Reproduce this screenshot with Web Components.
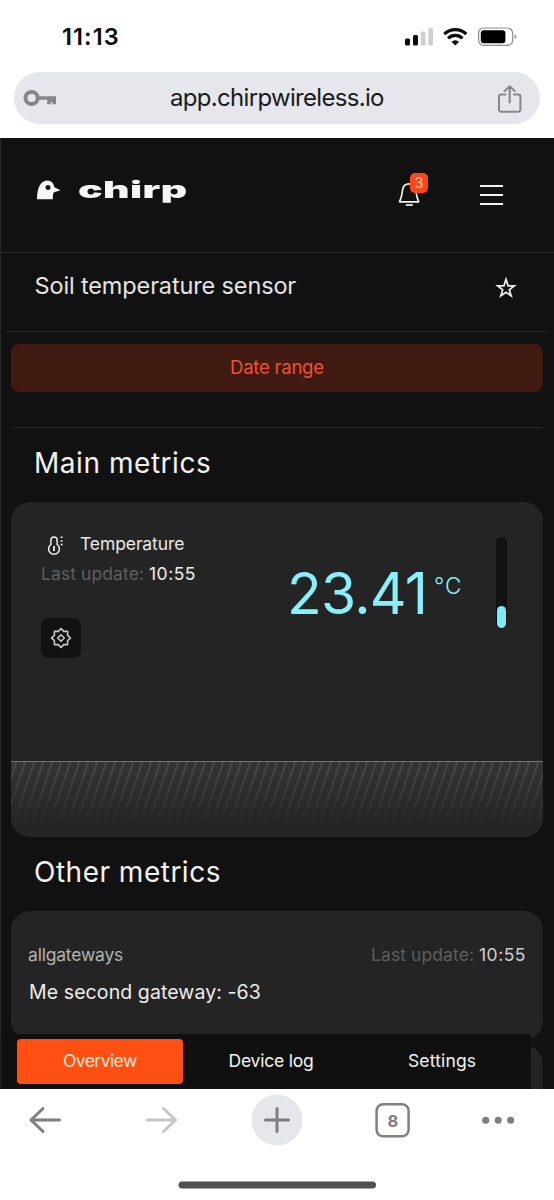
<!DOCTYPE html>
<html lang="en">
<head>
<meta charset="utf-8">
<title>Soil temperature sensor</title>
<style>
body{margin:0;width:554px;height:1200px;overflow:hidden;background:#fff;font-family:Inter,"Liberation Sans",sans-serif}
</style>
</head>
<body>
<phone-screen></phone-screen>
<script>
const define = (name, html, ready) => {
  const tpl = document.createElement('template');
  tpl.innerHTML = html;
  customElements.define(name, class extends HTMLElement {
    constructor() {
      super();
      this.attachShadow({ mode: 'open' }).append(tpl.content.cloneNode(true));
    }
    connectedCallback() { if (ready) ready(this, this.shadowRoot); }
  });
};

// Single line of text, tracked so that it spans the given width.
define('text-run', `<style>
:host{display:block;flex:none;white-space:nowrap;text-align:left}
span{display:inline-block}
</style><span><slot></slot></span>`, (el, root) => {
  const span = root.querySelector('span');
  el.style.fontSize = el.getAttribute('size') + 'px';
  const target = +el.getAttribute('width');
  if (target) {
    const n = el.textContent.length;
    const natural = span.offsetWidth;
    el.style.letterSpacing = (target - natural) / (n - 1) + 'px';
    el.style.width = target + 'px';
  }
});

define('status-bar', `<style>
:host{display:flex;height:72px;box-sizing:border-box;padding:0 37px 0 62px;justify-content:space-between;align-items:flex-start;color:#0b0b0b}
text-run{font-weight:600;line-height:74px}
svg{margin-top:27px}
</style>
<text-run size="23.5" width="56.5">11:13</text-run>
<svg width="112" height="20" viewBox="405 27 112 20">
<g fill="#0b0b0b"><rect x="405" y="38.5" width="5" height="7" rx="1.5"/><rect x="413" y="35" width="5" height="10.5" rx="1.5"/></g>
<g fill="#cfcfcf"><rect x="420.7" y="31.5" width="4.8" height="14" rx="1.5"/><rect x="428.3" y="28" width="4.8" height="17.5" rx="1.5"/></g>
<g fill="none" stroke="#0b0b0b" stroke-width="3.1"><path d="M444.3 34.2a15.6 15.6 0 0 1 22 0"/><path d="M448.1 38.4a10.2 10.2 0 0 1 14.4 0"/></g>
<path d="M455.3 45.4l-3.8-3.7a5.5 5.5 0 0 1 7.6 0z" fill="#0b0b0b"/>
<rect x="478.6" y="28" width="34" height="17.4" rx="5" fill="none" stroke="#8d8d8d" stroke-width="1.2"/>
<rect x="480.8" y="30.2" width="24.6" height="13" rx="3" fill="#000"/>
<path d="M514.6 34.2q1.8.6 1.8 2.5t-1.8 2.5z" fill="#8d8d8d"/>
</svg>`);

define('address-bar', `<style>
:host{display:flex;height:52px;margin:0 14px 14px;border-radius:26px;background:#e6e7ec;align-items:center;color:#1b1b1e;line-height:51px}
.key{margin-left:9px}text-run{margin:-2px 0 0 113px}.share{margin-left:112px}
</style>
<svg class="key" width="34" height="20" viewBox="23 88 34 20"><circle cx="31.6" cy="98" r="6.1" fill="none" stroke="#85888b" stroke-width="4"/><path d="M38 96.2h18v8h-3.6v-2h-1.7v2h-3.5v-4.4H38z" fill="#85888b"/></svg>
<text-run size="24" width="215">app.chirpwireless.io</text-run>
<svg class="share" width="26" height="30" viewBox="494 83 26 30" fill="none" stroke="#85888b" stroke-width="2" stroke-linecap="round" stroke-linejoin="round"><path d="M502.5 94.4h-4.2a2.3 2.3 0 0 0-2.3 2.3v12.8a2.3 2.3 0 0 0 2.3 2.3h16.8a2.3 2.3 0 0 0 2.3-2.3V96.7a2.3 2.3 0 0 0-2.3-2.3h-4.2M506.7 102.500V86.600M501.700 91l5-4.700 5 4.700"/></svg>`);

define('app-header', `<style>
:host{display:flex;height:114px;border-bottom:1px solid #292b2a;align-items:flex-start;color:#f6f6f6}
.bird{margin:41px 0 0 36px}
.word{width:108px;height:40px;margin:32px 0 0 17px}
text-run{font-weight:900;line-height:40px;transform:scaleX(1.74);transform-origin:0 50%}
.bell{position:relative;margin:43px 0 0 212px;width:30px;height:30px}
.badge{position:absolute;left:12px;top:-8px;width:18px;height:20px;border-radius:5px;background:#fb4718;color:#f7c9a5;font-size:14.500px;line-height:20px;text-align:center}
.menu{display:grid;gap:7px;margin:47px 0 0 52px;width:23px}
.menu i{height:2px;background:#f2f2f2}
</style>
<svg class="bird" width="25" height="21" viewBox="36 179 25 21"><path fill="#f6f6f6" fill-rule="evenodd" d="M37 199.200C37 190 39.500 180.500 47.300 180.500C51.500 180.500 53.700 183.500 54.500 187.300L60.500 190.200L54 192.300C52.800 194 52.800 196 52.900 199.200ZM48 185a2.500 2.500 0 1 0 .01 0z"/></svg>
<div class="word"><text-run size="23.500" width="63">chirp</text-run></div>
<div class="bell"><svg width="24" height="26" viewBox="398 181 24 26" fill="none" stroke="#f2f2f2" stroke-width="1.700"><path d="M409.200 183.800c-3.900 0-6.200 2.500-6.600 6.200-.5 4.500-1.400 8-3 11.800h19c-1.600-3.800-2.300-7.300-2.800-11.800-.5-3.700-2.800-6.200-6.600-6.200z" stroke-linejoin="round"/><path d="M405.800 205h7"/></svg><div class="badge">3</div></div>
<div class="menu"><i></i><i></i><i></i></div>`);

define('sensor-title', `<style>
:host{display:flex;height:78px;margin:0 5px 0 6px;border-bottom:1px solid #1f2522;color:#e4e4e4}
text-run{margin-left:28.5px;line-height:66px}
svg{margin:24px 0 0 198px}
</style>
<text-run size="23.500" width="262">Soil temperature sensor</text-run>
<svg width="22" height="22" viewBox="0 0 22 22"><path d="M11 2.300L13.100 8.800L19.300 8.900L14.300 12.700L16.200 18.900L11 15.200L5.800 18.900L7.700 12.700L2.700 8.900L8.900 8.800Z" fill="none" stroke="#efefef" stroke-width="1.700"/></svg>`);

define('date-range', `<style>
:host{display:block;margin:0 11px;padding-top:12px;height:83px;border-bottom:1px solid #222322}
div{height:48px;border-radius:8px;background:#411b11;color:#f54f2d;line-height:47px;display:flex;justify-content:center}
</style><div><text-run size="18.500" width="94">Date range</text-run></div>`);

define('section-title', `<style>
:host{display:block;height:74px;line-height:71px;padding-left:34px;color:#f2f2f2}
</style><slot></slot>`);

define('last-update', `<style>
:host{display:flex;justify-content:space-between;width:154px;line-height:22px;color:#5e5e5e}
.t{color:var(--time,#eee)}
</style><text-run size="17.500" width="103">Last update:</text-run><text-run class="t" size="17.500" width="46">10:55</text-run>`);

define('metric-card', `<style>
:host{display:flex;flex-direction:column;height:335px;box-sizing:border-box;margin:0 11px;border-radius:19px;background:#242424;overflow:hidden;color:#e9e9e9}
.body{display:flex;height:259px}
.info{width:246px;padding:31px 0 0 30px}
.name{display:flex;height:22px;line-height:22px}
.name svg{margin-left:5px}.name text-run{margin-left:15px}
last-update{margin-top:8px}
.gear{width:40px;height:40px;border-radius:8px;background:#121212;margin-top:33px;display:flex;align-items:center;justify-content:center}
.value{display:flex;color:#8aeffc;padding-top:57px}
.value .n{line-height:69px}
.value .u{line-height:30px;margin:12px 0 0 6px;font-weight:300}
.gauge{width:11px;height:92px;box-sizing:border-box;padding-bottom:1px;margin:35px 0 0 35px;border-radius:6px;background:#111;display:flex;align-items:flex-end;justify-content:center}
.gauge i{width:9px;height:22px;border-radius:5px;background:#7cebfa}
.chart{height:75px;border-top:1px solid #727272;background:linear-gradient(#343434,#242424 85%)}
.chart svg{display:block}
</style>
<div class="body">
<div class="info">
<div class="name"><svg width="19" height="23" viewBox="46 533 19 23" fill="none" stroke="#ededed" stroke-width="1.500"><path d="M50.900 544.500V540a3.100 3.100 0 0 1 6.200 0v4.500a5.400 5.400 0 1 1-6.200 0z"/><path d="M54 546v5" stroke-width="1.800"/><path d="M60.600 537.300h2M60.600 541h2M60.600 544.500h2" stroke-width="1.500"/></svg>
<text-run size="17.500" width="104">Temperature</text-run></div>
<last-update></last-update>
<div class="gear"><svg width="22" height="22" viewBox="0 0 22 22" fill="none" stroke="#c9c9c9" stroke-width="1.600" stroke-linejoin="round"><path d="M11 1.500L13.700 4.400H17.600V8.300L20.500 11L17.600 13.700V17.600H13.700L11 20.500L8.300 17.600H4.400V13.700L1.500 11L4.400 8.300V4.400H8.300Z"/><path d="M11 7.700L14.300 11L11 14.300L7.700 11Z"/></svg></div>
</div>
<div class="value"><text-run class="n" size="57" width="141">23.41</text-run><text-run class="u" size="22.500" width="27">°C</text-run></div>
<div class="gauge"><i></i></div>
</div>
<div class="chart"><svg width="532" height="75"><defs><pattern id="p" width="9" height="80" patternUnits="userSpaceOnUse" patternTransform="translate(22.300 0) skewX(-18.500)"><path d="M.9 0V80" stroke="#565656" stroke-width="1.300"/></pattern><linearGradient id="g" x2="0" y2="1"><stop stop-color="#fff"/><stop offset=".85" stop-color="#000"/></linearGradient><mask id="m"><rect width="532" height="75" fill="url(#g)"/></mask></defs><rect width="532" height="75" fill="url(#p)" mask="url(#m)"/></svg></div>`);

define('gateway-card', `<style>
:host{display:block;height:129px;box-sizing:border-box;margin:0 11px;border-radius:19px;background:#242424;padding:33px 18px 0 17px;color:#ededed;--time:#cfcfcf}
.row{display:flex;justify-content:space-between;line-height:22px}
.name{color:#b2b2b2}.val{line-height:30px;margin:11px 0 0 1px}
</style><div class="row"><text-run class="name" size="17.500" width="95">allgateways</text-run><last-update></last-update></div>
<text-run class="val" size="19.500" width="232">Me second gateway: -63</text-run>`);

define('tab-strip', `<style>
:host{position:absolute;left:2px;bottom:0;width:529px;height:55px;box-sizing:border-box;padding:5px 0 5px 15px;background:#101010;display:flex;color:#f5f5f5;line-height:43px}
div{width:166px;display:flex;justify-content:center}
.on{height:45px;margin-right:5px;border-radius:4px;background:#ff4f12;color:#ffe9d5}
.last{width:176px}
</style><div class="on"><text-run size="17.500" width="74">Overview</text-run></div><div><text-run size="17.500" width="85">Device log</text-run></div><div class="last"><text-run size="17.500" width="68">Settings</text-run></div>`);

define('browser-toolbar', `<style>
:host{display:flex;position:relative;height:111px;background:#fff}
</style><svg width="554" height="111" viewBox="0 1089 554 111" fill="none" stroke-linecap="round" stroke-linejoin="round">
<path d="M59.500 1120H31M43 1108.500L31 1120L43 1131.500" stroke="#7c7e80" stroke-width="3"/>
<path d="M147 1120h28.500M163.500 1108.500l12 11.500l-12 11.500" stroke="#c6c6c8" stroke-width="3"/>
<circle cx="277" cy="1120" r="25.500" fill="#e6e7ec"/>
<path d="M265.500 1120h23M277 1108.500v23" stroke="#7c7e80" stroke-width="3"/>
<rect x="376.600" y="1104.300" width="32" height="32" rx="6.500" stroke="#7c8184" stroke-width="2.500"/>
<text x="392.800" y="1126.800" text-anchor="middle" font-size="16.500" font-weight="700" fill="#7c7e80">8</text>
<g fill="#7c7e80"><circle cx="485.700" cy="1120.300" r="3.500"/><circle cx="498.200" cy="1120.300" r="3.500"/><circle cx="510.700" cy="1120.300" r="3.500"/></g>
<rect x="178.500" y="1181.500" width="197.500" height="7" rx="3.500" fill="#515151"/>
</svg>`);

define('phone-screen', `<style>
:host{display:block;width:554px;height:1200px}
.app{position:relative;height:951px;overflow:hidden;background:#111;box-shadow:inset 1px 0 #242726}
.next{height:60px;margin:5px 11px 0;border-radius:19px;background:#242424}
</style>
<status-bar></status-bar><address-bar></address-bar>
<div class="app">
<app-header></app-header><sensor-title></sensor-title><date-range></date-range>
<section-title><text-run size="28" width="177">Main metrics</text-run></section-title>
<metric-card></metric-card>
<section-title><text-run size="28" width="186">Other metrics</text-run></section-title>
<gateway-card></gateway-card>
<div class="next"></div>
<tab-strip></tab-strip>
</div>
<browser-toolbar></browser-toolbar>`);
</script>
</body>
</html>
